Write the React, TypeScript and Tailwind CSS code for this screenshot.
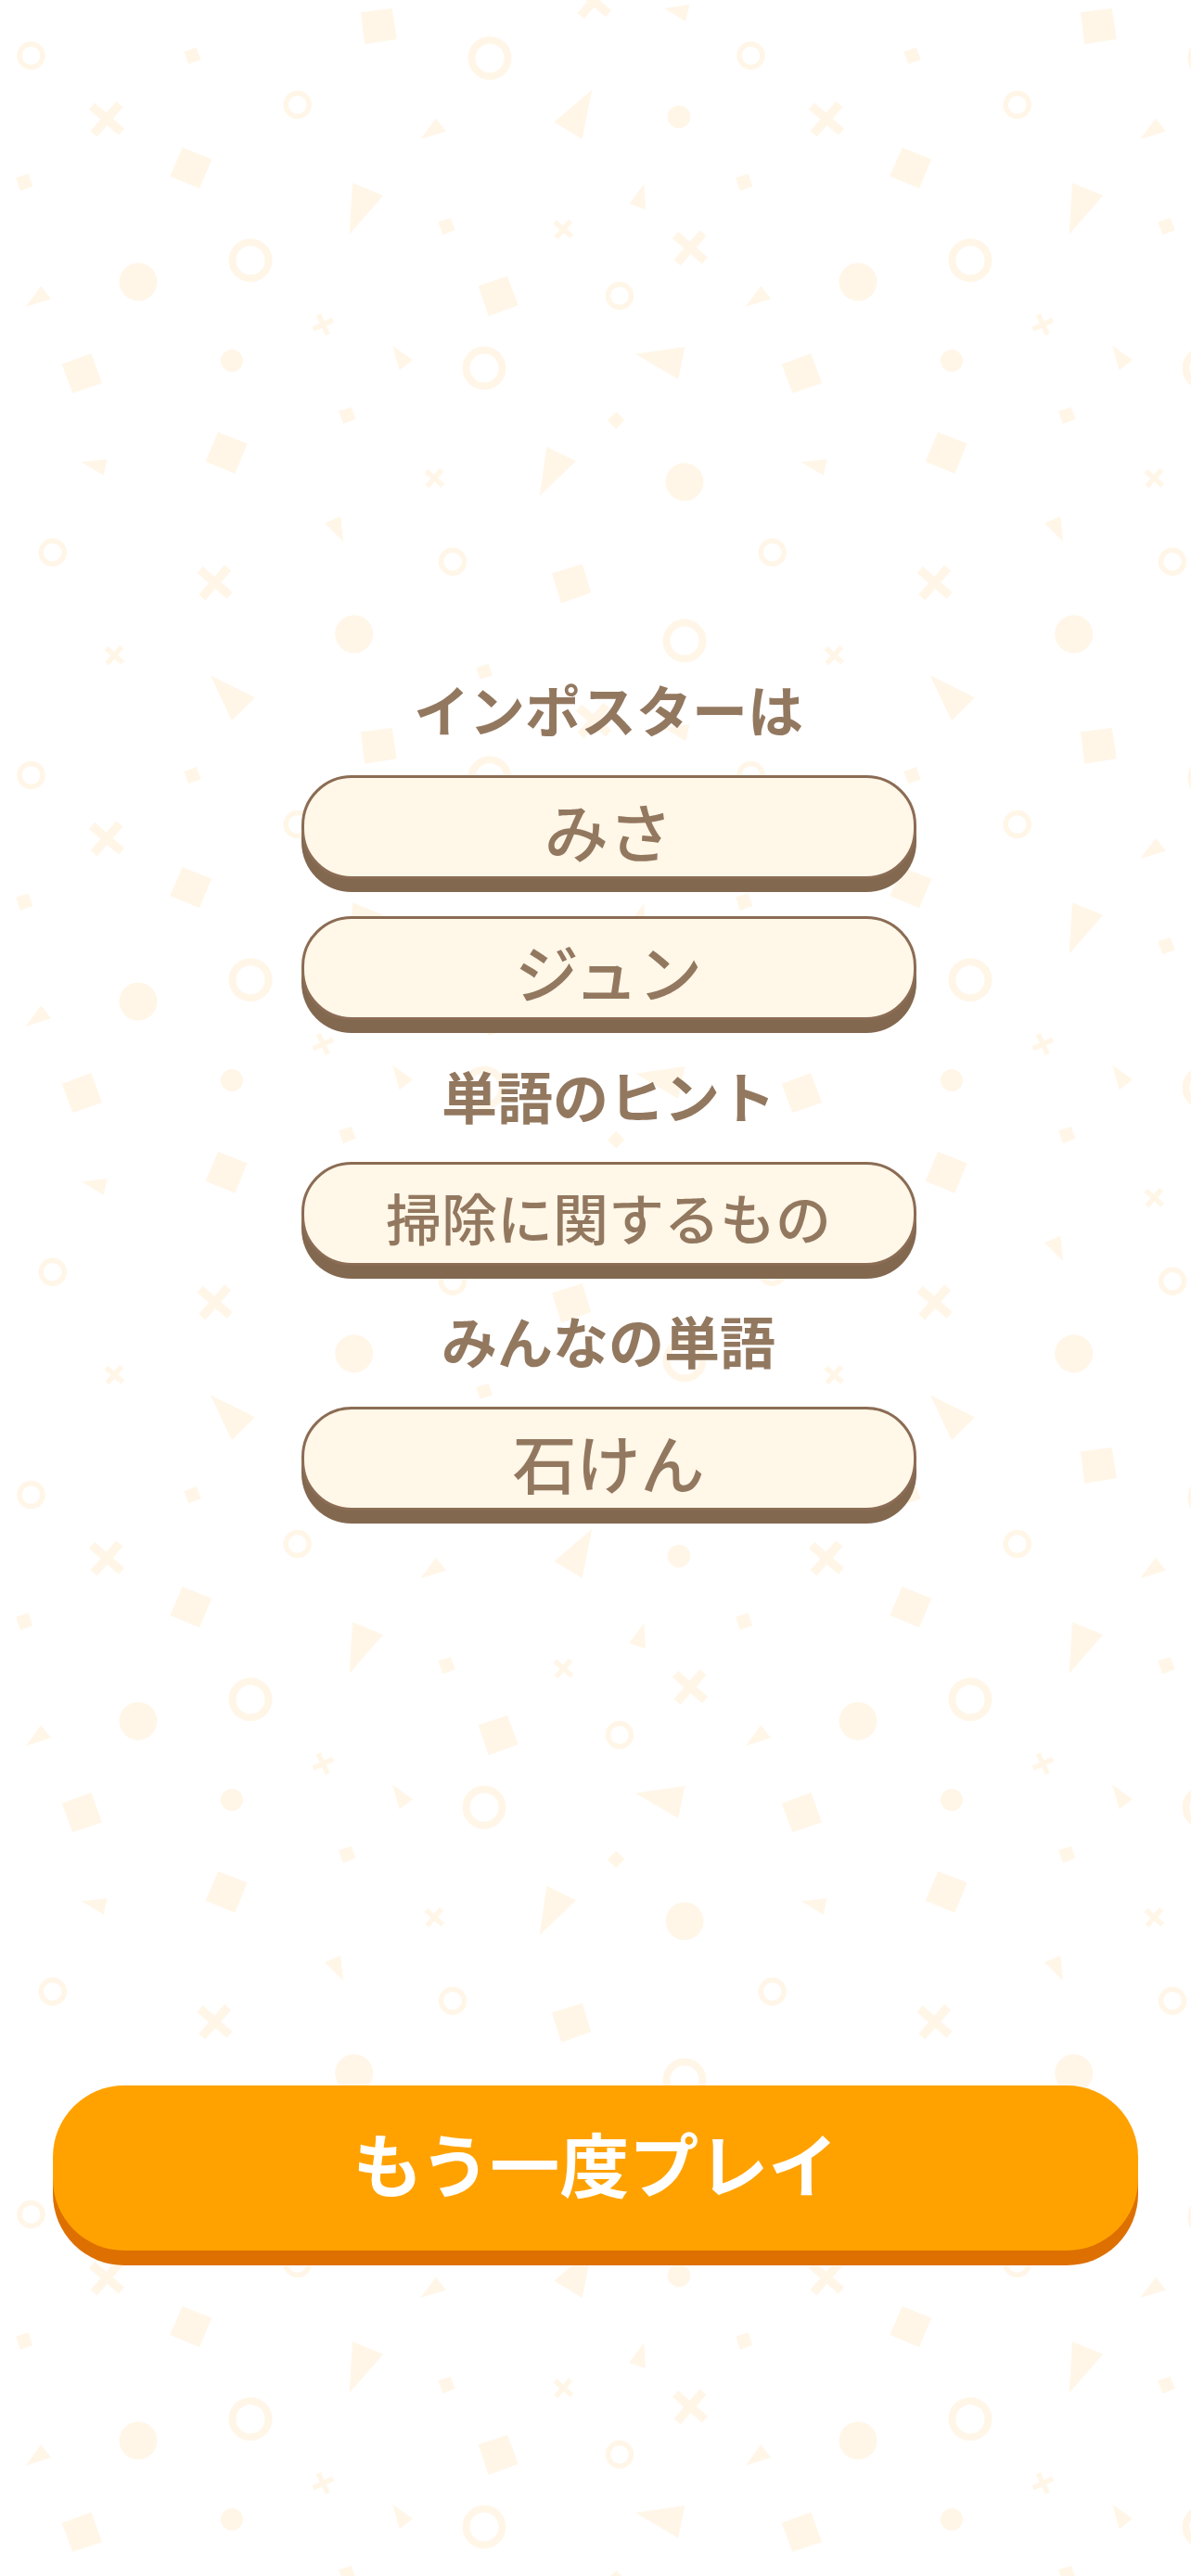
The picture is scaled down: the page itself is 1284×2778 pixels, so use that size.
const shapeFill = "#fff6e8";

const rings = [
  [33.5, 60, 12.5, 5.5], [320.7, 113, 12.5, 5.5], [270, 280.7, 19.5, 8], [528, 62.7, 19.5, 8],
  [668, 319, 12.5, 5.5], [522, 397, 19.5, 8], [56.7, 595.7, 12.5, 5.5], [488, 605.7, 12.5, 5.5], [738, 691, 19.5, 8],
];

const dots = [
  [149, 304, 20.5], [250, 389, 12], [732, 126, 12.3], [381.7, 683.7, 20.5], [738, 519.7, 20.5],
];

const polygons = [
  // squares
  "198.3,56 211.7,51 216.7,64.3 203.3,69.3",
  "196.7,159 228.3,171.7 215,203.3 183.3,190",
  "17.3,191.7 30.7,187.3 35.3,201 21.7,206",
  "389,13.3 422.7,9 427.7,42.3 393.3,47.7",
  "66.7,392.7 98.3,381 110,413.3 78.3,424",
  "235,466 266.7,478.3 253.3,510.7 221.7,497.7",
  "365,443.3 379,439 383.3,451.7 370,457.3",
  "472.3,239 485.7,235 490.7,248.3 477.3,253.3",
  "515.7,308.3 547,297.7 558.7,329.3 526.7,341",
  "595,618.3 627.7,608.3 637.3,639 605,650.7",
  "664.3,444 673.3,452.7 664.3,462.7 655,453.3",
  "513.3,720 526.7,715.7 531,728.3 517.7,732.7",
  // triangles
  "44.3,308.3 55,322.3 27.7,331",
  "380,197.3 413.3,210.7 376.7,252.7",
  "470,127.7 481,141.7 453.3,150",
  "638.3,96.7 627.7,150 597.3,131.7",
  "694.3,198.3 696,226 678.3,220",
  "716,9 743.3,5 739.3,23.3",
  "423.3,372.7 445,388.3 430.7,399.3",
  "738.3,374 685,381.7 731.3,409",
  "87.7,498.3 115.7,495 111.7,512.7",
  "367.3,556.7 370,584 350,564.3",
  "226.7,728.3 275,752.3 250,777.3",
  "589.3,481.7 621,497.3 581.7,535",
];

// x, y, half size, stroke, rotation
const crosses = [
  [115, 128.3, 15, 9.5, -4], [348.3, 350, 8.5, 5.5, 20], [607.3, 247.3, 8.5, 5.5, -4],
  [744, 267.3, 15, 9.5, -4], [640, 777, 15, 9.5, -4], [640, 1, 15, 9.5, -4],
  [231.7, 628.3, 15, 9.5, -4], [123.3, 706.7, 8.5, 5.5, -4], [468.3, 515.7, 8.5, 5.5, -4],
];

function BackgroundPattern() {
  return (
    <svg className="absolute inset-0 h-full w-full" aria-hidden="true">
      <defs>
        <pattern id="confetti" width="776" height="776" patternUnits="userSpaceOnUse">
          {rings.map(([x, y, r, w], i) => (
            <circle key={i} cx={x} cy={y} r={r} fill="none" stroke={shapeFill} strokeWidth={w} />
          ))}
          {dots.map(([x, y, r], i) => (
            <circle key={i} cx={x} cy={y} r={r} fill={shapeFill} />
          ))}
          {polygons.map((points, i) => (
            <polygon key={i} points={points} fill={shapeFill} />
          ))}
          {crosses.map(([x, y, s, w, rot], i) => (
            <path
              key={i}
              d={`M${-s} ${-s}L${s} ${s}M${s} ${-s}L${-s} ${s}`}
              transform={`translate(${x} ${y}) rotate(${rot})`}
              stroke={shapeFill}
              strokeWidth={w}
              fill="none"
            />
          ))}
        </pattern>
      </defs>
      <rect width="100%" height="100%" fill="url(#confetti)" />
    </svg>
  );
}

function Label({ children }: { children: string }) {
  return (
    <h2 className="flex h-[84px] items-center justify-center pb-[6px] text-[60px] font-bold text-[#937860]">
      {children}
    </h2>
  );
}

function ValueBox({ children, long }: { children: string; long?: boolean }) {
  return (
    <div
      className={`flex h-[112px] items-center justify-center rounded-[54px] border-[3px] border-[#8b6c54] bg-[#fff7e8] pt-[6px] font-medium leading-none whitespace-nowrap text-[#937860] shadow-[0_14px_0_#836850] ${
        long ? "text-[60px]" : "text-[69px]"
      }`}
    >
      {children}
    </div>
  );
}

export default function App() {
  return (
    <div className="relative h-[2778px] w-full overflow-hidden bg-white font-['Noto_Sans_CJK_JP','Noto_Sans',sans-serif]">
      <BackgroundPattern />

      <main className="relative flex h-full flex-col px-[57px] pt-[725px] pb-[351px]">
        <div className="ml-[267.5px] flex w-[663px] flex-col gap-[41.5px]">
          <section className="flex flex-col gap-[27px]">
            <Label>インポスターは</Label>
            <div className="flex flex-col gap-[40px]">
              <ValueBox>みさ</ValueBox>
              <ValueBox>ジュン</ValueBox>
            </div>
          </section>

          <section className="flex flex-col gap-[27px]">
            <Label>単語のヒント</Label>
            <ValueBox long>掃除に関するもの</ValueBox>
          </section>

          <section className="flex flex-col gap-[27px]">
            <Label>みんなの単語</Label>
            <ValueBox>石けん</ValueBox>
          </section>
        </div>

        <button className="mt-auto flex h-[178px] w-full items-center justify-center rounded-[77px] bg-[#ffa200] pb-[12px] text-[75px] font-bold text-white shadow-[0_16px_0_#dd7000]">
          もう一度プレイ
        </button>
      </main>
    </div>
  );
}
